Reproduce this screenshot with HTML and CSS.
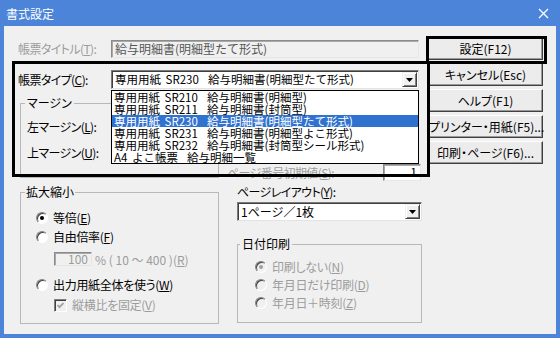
FILE: index.html
```html
<!DOCTYPE html>
<html lang="ja">
<head>
    <meta charset="UTF-8">
    <title>書式設定</title>
    <link rel="stylesheet" href="styles.css">
</head>
<body>
    <div class="window">
        <div class="titlebar">
            <span class="title">書式設定</span>
            <svg class="close" width="11" height="11" viewBox="0 0 11 11"><path d="M1 1L10 10M10 1L1 10" stroke="#fff" stroke-width="1.3"/></svg>
        </div>
        <div class="client">
            <div class="top">
                <div class="form">
                    <div class="row">
                        <span class="lbl gray">帳票タイトル(<u>T</u>):</span>
                        <div class="field readonly">給与明細書(明細型たて形式)</div>
                    </div>
                    <div class="row row-type">
                        <span class="lbl">帳票タイプ(<u>C</u>):</span>
                        <div class="combo wide">
                            <span class="combo-text">専用用紙 SR230  給与明細書(明細型たて形式)</span>
                            <span class="combo-btn"><svg width="7" height="4" viewBox="0 0 7 4"><polygon points="0,0 7,0 3.5,4" fill="#000"/></svg></span>
                        </div>
                    </div>
                    <div class="margins">
                        <fieldset class="group group-margin">
                            <legend>マージン</legend>
                            <div class="mrow">左マージン(<u>L</u>):</div>
                            <div class="mrow">上マージン(<u>U</u>):</div>
                        </fieldset>
                        <div class="pageno">
                            <span class="lbl gray">ページ番号初期値(<u>S</u>):</span>
                            <span class="field num">1</span>
                        </div>
                    </div>
                    <ul class="droplist">
                        <li>専用用紙 SR210  給与明細書(明細型)</li>
                        <li>専用用紙 SR211  給与明細書(封筒型)</li>
                        <li class="sel">専用用紙 SR230  給与明細書(明細型たて形式)</li>
                        <li>専用用紙 SR231  給与明細書(明細型よこ形式)</li>
                        <li>専用用紙 SR232  給与明細書(封筒型シール形式)</li>
                        <li>A4 よこ帳票  給与明細一覧</li>
                    </ul>
                </div>
                <div class="buttons">
                    <button class="btn">設定(F12)</button>
                    <button class="btn">キャンセル(Esc)</button>
                    <button class="btn">ヘルプ(F1)</button>
                    <button class="btn">プリンター・用紙(F5)...</button>
                    <button class="btn">印刷・ページ(F6)...</button>
                </div>
            </div>
            <div class="bottom">
                <fieldset class="group group-scale">
                    <legend>拡大縮小</legend>
                    <label class="opt first"><i class="radio on"></i>等倍(<u>E</u>)</label>
                    <label class="opt second"><i class="radio"></i>自由倍率(<u>F</u>)</label>
                    <div class="ratio">
                        <span class="field pct">100</span>
                        <span class="gray">% ( 10 〜 400 )(<u>R</u>)</span>
                    </div>
                    <label class="opt fit"><i class="radio"></i>出力用紙全体を使う(<u>W</u>)</label>
                    <label class="check gray"><i class="checkbox"><svg width="7" height="7" viewBox="0 0 7 7"><path d="M0.5 3L2.5 5.2L6.5 1" stroke="#a0a0a0" stroke-width="1.8" fill="none"/></svg></i>縦横比を固定(<u>V</u>)</label>
                </fieldset>
                <div class="layout">
                    <div class="caption">ページレイアウト(<u>Y</u>):</div>
                    <div class="combo small">
                        <span class="combo-text">1ページ／1枚</span>
                        <span class="combo-btn"><svg width="7" height="4" viewBox="0 0 7 4"><polygon points="0,0 7,0 3.5,4" fill="#000"/></svg></span>
                    </div>
                    <fieldset class="group group-date gray">
                        <legend>日付印刷</legend>
                        <label class="opt first"><i class="radio on"></i>印刷しない(<u>N</u>)</label>
                        <label class="opt next"><i class="radio"></i>年月日だけ印刷(<u>D</u>)</label>
                        <label class="opt next"><i class="radio"></i>年月日＋時刻(<u>Z</u>)</label>
                    </fieldset>
                </div>
            </div>
        </div>
        <div class="mark mark-form"></div>
        <div class="mark mark-ok"></div>
    </div>
</body>
</html>
```

FILE: styles.css
```css
* {
    box-sizing: border-box;
}
body {
    margin: 0;
    font-family: "Noto Sans CJK JP", "Noto Sans", sans-serif;
    font-size: 12px;
    color: #000;
    background: #fff;
}
u {
    text-underline-offset: 1px;
}
.window {
    position: relative;
    width: 560px;
    height: 338px;
    background: #4b84d8;
    padding: 0 4px 4px;
}
.titlebar {
    height: 26px;
    display: flex;
    align-items: center;
    justify-content: space-between;
    padding: 0 7px 0 2px;
    color: #fff;
    font-size: 12px;
}
.client {
    height: 308px;
    background: #f0f0f0;
    padding-left: 14px;
}
.gray {
    color: #9c9c9c;
}

/* top part */
.top {
    height: 159px;
    display: flex;
    padding-top: 11px;
}
.form {
    position: relative;
    width: 410px;
    padding-top: 3px;
}
.row {
    display: flex;
    align-items: center;
    height: 18px;
}
.row-type {
    margin-top: 12px;
    height: 19px;
}
.lbl, .mrow, .caption, .opt, .check, legend, .btn {
    font-feature-settings: "palt";
}
.lbl, .mrow, .caption {
    letter-spacing: -0.6px;
}
.opt, .check {
    letter-spacing: -0.3px;
}
.lbl {
    width: 93px;
    flex: none;
    line-height: 14px;
    white-space: nowrap;
}
.field {
    border: 1px solid;
    border-color: #8a8a8a #e6e6e6 #e6e6e6 #8a8a8a;
    box-shadow: inset 1px 1px 0 #a9a9a9;
    background: #f0f0f0;
    line-height: 14px;
    white-space: nowrap;
}
.readonly {
    width: 308px;
    height: 18px;
    padding: 1px 3px;
    color: #555;
}
.combo {
    display: flex;
    align-items: stretch;
    height: 19px;
    background: #fff;
    border: 1px solid;
    border-color: #7a7a7a #e3e3e3 #e3e3e3 #7a7a7a;
    box-shadow: inset 1px 1px 0 #404040;
    padding: 1px 1px 1px 3px;
}
.combo.wide {
    width: 308px;
}
.combo.wide .combo-text {
    font-size: 11.5px;
    word-spacing: 2px;
}
.combo.small {
    width: 185px;
    margin-top: 3px;
}
.combo-text {
    flex: 1;
    line-height: 15px;
    white-space: pre;
}
.combo-btn {
    flex: none;
    width: 15px;
    display: flex;
    align-items: center;
    justify-content: center;
    background: #f0f0f0;
    border: 1px solid;
    border-color: #f0f0f0 #404040 #404040 #f0f0f0;
    box-shadow: inset 1px 1px 0 #fff, inset -1px -1px 0 #808080;
}

.margins {
    display: flex;
}
.group {
    margin: 0;
    border: 1px solid #b8b8b8;
    min-width: 0;
}
.group legend {
    padding: 0 2px;
    line-height: 14px;
}
.group-margin {
    margin: 7px 0 0 2px;
    width: 199px;
    height: 82px;
    padding: 0 0 0 6px;
}
.group-margin legend {
    margin-left: -2px;
}
.mrow {
    margin-top: 10px;
    line-height: 14px;
}
.mrow + .mrow {
    margin-top: 12px;
}
.pageno {
    display: flex;
    align-items: center;
    height: 17px;
    margin: 75px 0 0 8px;
}
.pageno .lbl {
    width: 156px;
}
.num {
    width: 38px;
    height: 17px;
    background: #fff;
    text-align: right;
    padding-right: 3px;
}

.droplist {
    position: absolute;
    left: 93px;
    top: 53px;
    width: 308px;
    margin: 0;
    padding: 0;
    list-style: none;
    background: #fff;
    border: 1px solid #000;
    font-size: 11.5px;
}
.droplist li {
    height: 12px;
    line-height: 12px;
    padding-left: 2px;
    white-space: pre;
    word-spacing: 2px;
}
.droplist .sel {
    background: #3072cf;
    color: #fff;
}

.buttons {
    display: flex;
    flex-direction: column;
    gap: 3px;
}
.btn {
    width: 115px;
    height: 23px;
    padding: 0;
    font-family: inherit;
    font-size: 12px;
    color: #000;
    background: #ececec;
    border: 1px solid;
    border-color: #fff #404040 #404040 #fff;
    box-shadow: inset -1px -1px 0 #9a9a9a;
    white-space: nowrap;
}

/* bottom part */
.bottom {
    display: flex;
}
.group-scale {
    width: 199px;
    margin-left: 2px;
    padding: 0 0 10px 15px;
}
.group-scale legend {
    margin-left: -11px;
    padding: 0 1px;
}
.opt, .check {
    display: flex;
    align-items: center;
    height: 16px;
    line-height: 16px;
    white-space: nowrap;
}
.opt.first {
    margin-top: 11px;
}
.opt.second {
    margin-top: 3px;
}
.opt.fit {
    margin-top: 11px;
}
.radio {
    position: relative;
    flex: none;
    width: 12px;
    height: 12px;
    margin-right: 5px;
    border-radius: 50%;
    background: #fff;
    border: 1px solid;
    border-color: #808080 #fff #fff #808080;
    box-shadow: inset 1px 1px 0 #404040;
}
.radio.on::after {
    content: "";
    position: absolute;
    left: 3px;
    top: 3px;
    width: 4px;
    height: 4px;
    border-radius: 50%;
    background: #000;
}
.gray .radio {
    background: #f0f0f0;
}
.gray .radio.on::after {
    background: #a0a0a0;
}
.ratio {
    display: flex;
    align-items: center;
    height: 14px;
    margin: 7px 0 0 18px;
    white-space: nowrap;
}
.pct {
    width: 38px;
    height: 14px;
    line-height: 12px;
    text-align: right;
    padding-right: 3px;
    color: #9c9c9c;
    margin-right: 3px;
}
.check {
    margin: 4px 0 0 18px;
}
.checkbox {
    flex: none;
    width: 13px;
    height: 13px;
    margin-right: 5px;
    display: flex;
    align-items: center;
    justify-content: center;
    background: #f0f0f0;
    border: 1px solid;
    border-color: #808080 #fff #fff #808080;
    box-shadow: inset 1px 1px 0 #404040;
}

.layout {
    width: 185px;
    margin-left: 18px;
}
.caption {
    line-height: 14px;
}
.group-date {
    margin-top: 16px;
    padding: 0 0 11px 17px;
}
.group-date legend {
    margin-left: -15px;
    color: #000;
}
.group-date .opt.first {
    margin-top: 8px;
}
.opt.next {
    margin-top: 2px;
}

/* highlight frames drawn over the dialog */
.mark {
    position: absolute;
    border: 3px solid #000;
}
.mark-form {
    left: 12px;
    top: 61px;
    width: 418px;
    height: 116px;
}
.mark-ok {
    left: 426px;
    top: 36px;
    width: 121px;
    height: 28px;
}
```
